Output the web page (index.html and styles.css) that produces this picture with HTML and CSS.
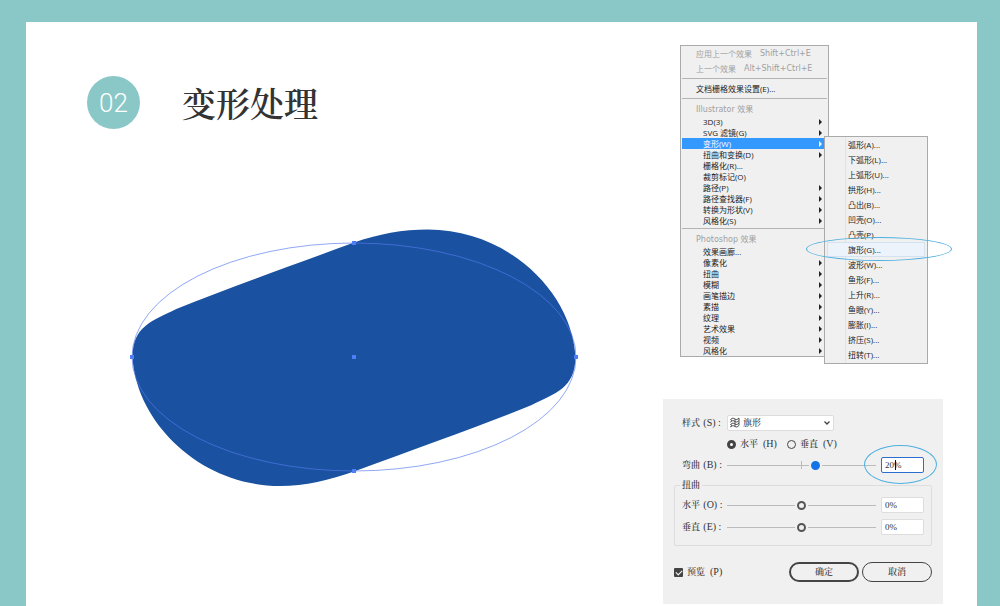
FILE: index.html
```html
<!DOCTYPE html>
<html lang="zh-CN">
<head>
<meta charset="utf-8">
<title>变形处理</title>
<link rel="stylesheet" href="styles.css">
</head>
<body>
<main class="sheet">
  <section class="lesson">
    <header class="lesson-head">
      <span class="badge">02</span>
      <h1 class="title">变形处理</h1>
    </header>
    <svg class="artwork" viewBox="130 228 450 260" role="img" aria-label="旗形变形">
      <path fill="#1a51a0" d="M132.500 357C133 326 152 321 176.300 309C228 288 288 267 354 242.500C378 234 403 229.500 428 229.500C508 229.500 572 292 575.500 357C575 388 556 393 531.700 405C480 426 420 447 354 471.500C330 480 305 486 280 486C200 486 136 422 132.500 357Z"/>
      <ellipse cx="354" cy="357" rx="222" ry="114" fill="none" stroke="#5579ee" stroke-opacity=".65"/>
      <g fill="#4f7df5">
        <rect x="130" y="355" width="4" height="4"/>
        <rect x="574" y="355" width="4" height="4"/>
        <rect x="352" y="241" width="4" height="4"/>
        <rect x="352" y="469" width="4" height="4"/>
        <rect x="352" y="355" width="4" height="4"/>
      </g>
    </svg>
  </section>

  <aside class="panels">
    <nav class="menus">
      <div class="menu">
        <button class="entry muted" disabled>应用上一个效果 <span class="keys">Shift+Ctrl+E</span></button>
        <button class="entry muted" disabled>上一个效果 <span class="keys">Alt+Shift+Ctrl+E</span></button>
        <hr class="rule">
        <button class="entry">文档栅格效果设置(E)...</button>
        <hr class="rule">
        <div class="entry muted group">Illustrator 效果</div>
        <ul class="list">
          <li><button class="item more">3D(3)</button></li>
          <li><button class="item more">SVG 滤镜(G)</button></li>
          <li><button class="item more active">变形(W)</button></li>
          <li><button class="item more">扭曲和变换(D)</button></li>
          <li><button class="item">栅格化(R)...</button></li>
          <li><button class="item">裁剪标记(O)</button></li>
          <li><button class="item more">路径(P)</button></li>
          <li><button class="item more">路径查找器(F)</button></li>
          <li><button class="item more">转换为形状(V)</button></li>
          <li><button class="item more">风格化(S)</button></li>
        </ul>
        <hr class="rule">
        <div class="entry muted group">Photoshop 效果</div>
        <ul class="list">
          <li><button class="item">效果画廊...</button></li>
          <li><button class="item more">像素化</button></li>
          <li><button class="item more">扭曲</button></li>
          <li><button class="item more">模糊</button></li>
          <li><button class="item more">画笔描边</button></li>
          <li><button class="item more">素描</button></li>
          <li><button class="item more">纹理</button></li>
          <li><button class="item more">艺术效果</button></li>
          <li><button class="item more">视频</button></li>
          <li><button class="item more">风格化</button></li>
        </ul>
      </div>
      <ul class="submenu">
        <li><button class="sub">弧形(A)...</button></li>
        <li><button class="sub">下弧形(L)...</button></li>
        <li><button class="sub">上弧形(U)...</button></li>
        <li><button class="sub">拱形(H)...</button></li>
        <li><button class="sub">凸出(B)...</button></li>
        <li><button class="sub">凹壳(O)...</button></li>
        <li><button class="sub">凸壳(P)...</button></li>
        <li><button class="sub hover">旗形(G)...</button></li>
        <li><button class="sub">波形(W)...</button></li>
        <li><button class="sub">鱼形(F)...</button></li>
        <li><button class="sub">上升(R)...</button></li>
        <li><button class="sub">鱼眼(Y)...</button></li>
        <li><button class="sub">膨胀(I)...</button></li>
        <li><button class="sub">挤压(S)...</button></li>
        <li><button class="sub">扭转(T)...</button></li>
      </ul>
      <span class="ring ring-menu"></span>
    </nav>

    <form class="dialog">
      <div class="row">
        <label for="style">样式 <span class="key">(S) :</span></label>
        <div class="picker">
          <select id="style" class="select"><option>旗形</option></select>
          <svg class="flag" viewBox="0 0 12 12" fill="none" stroke="#444" stroke-width=".9"><path d="M1.500 2.500C3.500 .500 4.500 1 6 2S8.500 2.500 10 1V8.500C8.500 10 7.500 10.500 6 9.500S3.500 8 1.500 10C3 8.500 3 7.500 1.500 7.500C3.500 5.500 4.500 6 6 7S8.500 7.500 10 6M1.500 2.500C3 2.500 3 4 1.500 5C3.500 3 4.500 3.500 6 4.500S8.500 5 10 3.500M6 2V9.500"/></svg>
          <svg class="chevron" viewBox="0 0 8 6" fill="none" stroke="#444" stroke-width="1.300"><path d="M1.500 1.500L4 4L6.500 1.500"/></svg>
        </div>
      </div>
      <div class="row">
        <span></span>
        <div class="radios">
          <label class="choice"><input class="radio" type="radio" name="axis" checked>水平 <span class="key">(H)</span></label>
          <label class="choice"><input class="radio" type="radio" name="axis">垂直 <span class="key">(V)</span></label>
        </div>
      </div>
      <div class="row">
        <label for="bend">弯曲 <span class="key">(B) :</span></label>
        <input id="bend" class="range main" type="range" min="-100" max="100" value="20">
        <div class="value">
          <input class="field focused" type="text" value="20%" aria-label="弯曲值">
          <span class="caret"></span>
          <span class="ring ring-value"></span>
        </div>
      </div>
      <fieldset class="distort">
        <legend class="legend">扭曲</legend>
        <div class="row">
          <label for="dx">水平 <span class="key">(O) :</span></label>
          <input id="dx" class="range" type="range" min="-100" max="100" value="0">
          <input class="field" type="text" value="0%" aria-label="水平值">
        </div>
        <div class="row">
          <label for="dy">垂直 <span class="key">(E) :</span></label>
          <input id="dy" class="range" type="range" min="-100" max="100" value="0">
          <input class="field" type="text" value="0%" aria-label="垂直值">
        </div>
      </fieldset>
      <footer class="actions">
        <label class="choice"><input class="check" type="checkbox" checked>预览 <span class="key">(P)</span></label>
        <div class="buttons">
          <button class="btn primary" type="button">确定</button>
          <button class="btn" type="button">取消</button>
        </div>
      </footer>
    </form>
  </aside>
</main>
</body>
</html>
```
FILE: styles.css
```css
* { box-sizing: border-box; }
body {
  margin: 0;
  padding: 22px 23px 0 26px;
  min-height: 100vh;
  display: flex;
  background: #8ac8c7;
  color: #222;
  font-family: "Open Sans", "Noto Sans CJK SC", sans-serif;
}
button, input, select { font: inherit; color: inherit; margin: 0; }
ul { list-style: none; margin: 0; padding: 0; }

.sheet {
  flex: 1;
  display: grid;
  grid-template-columns: 1fr 280px;
  padding-right: 34px;
  background: #fff;
}

.lesson-head {
  display: flex;
  align-items: center;
  gap: 42px;
  padding: 54px 0 0 61px;
}
.badge {
  display: grid;
  place-items: center;
  width: 53px;
  height: 53px;
  border-radius: 50%;
  background: #8ac8c7;
  color: #fff;
  font: 300 26px/32px "Liberation Sans Narrow", Roboto, sans-serif;
}
.title {
  margin: 0;
  color: #333;
  font: 600 34px/40px "Noto Serif CJK SC", "Noto Sans CJK SC", serif;
}
.artwork {
  display: block;
  width: calc(100% - 104px);
  max-width: 450px;
  margin: 99px 0 0 104px;
}

.panels { padding-top: 23px; }
.menus {
  position: relative;
  width: 149px;
  margin-left: 17px;
  font-size: 8px;
}
.menu {
  padding: 0 1px;
  border: 1px solid #aaa;
  background: #f0f0f0;
}
.entry {
  display: flex;
  align-items: center;
  width: 100%;
  height: 15px;
  padding: 0 14px;
  border: 0;
  background: none;
  white-space: nowrap;
}
.muted { color: #a0a0a0; }
.keys { margin-left: 8px; font-family: "DejaVu Sans", sans-serif; }
.group { font-family: "DejaVu Sans", "Noto Sans CJK SC", sans-serif; }
.rule {
  height: 1px;
  margin: 2px 0;
  border: 0;
  background: #b4b4b4;
}
.item {
  display: flex;
  align-items: center;
  justify-content: space-between;
  width: 100%;
  height: 11px;
  padding: 0 5px 0 21px;
  border: 0;
  background: none;
  line-height: 11px;
}
.more::after {
  content: "";
  border: 3px solid transparent;
  border-left-color: currentColor;
  border-right: 0;
}
.active { background: #3399ff; color: #fff; }

.submenu {
  position: absolute;
  left: 144px;
  top: 91px;
  width: 104px;
  padding: 0 2px 1px;
  border: 1px solid #aaa;
  background: linear-gradient(#e2e2e2, #e2e2e2) 20px 0 / 1px 100% no-repeat #f0f0f0;
}
.sub {
  display: block;
  width: 100%;
  height: 15px;
  padding: 0 20px;
  border: 1px solid transparent;
  background: none;
  line-height: 13px;
  text-align: left;
}
.hover { border-color: #d3e2f0; background: #ecf3fa; }

.ring {
  position: absolute;
  border: 1px solid #4fb0e0;
  border-radius: 50%;
  pointer-events: none;
}
.ring-menu { left: 126px; top: 192px; width: 146px; height: 24px; }
.ring-value { left: -17px; top: -12px; width: 73px; height: 39px; }

.dialog {
  display: grid;
  gap: 5px;
  margin-top: 42px;
  padding: 16px 11px 22px;
  background: #f0f0f0;
  color: #333;
  font-family: "Noto Serif CJK SC", "Noto Sans CJK SC", serif;
  font-size: 9px;
  font-weight: 500;
  line-height: 16px;
}
.key { margin-left: 1px; font-family: "Liberation Serif", serif; font-size: 10px; }
.row {
  display: grid;
  grid-template-columns: 40px 1fr 43px;
  gap: 5px;
  padding: 0 8px;
  height: 16px;
  white-space: nowrap;
}
.picker { position: relative; width: 107px; }
.select {
  display: block;
  appearance: none;
  width: 100%;
  height: 16px;
  padding: 0 15px;
  border: 1px solid #ddd;
  border-radius: 2px;
  background: #fff;
  line-height: 14px;
}
.flag { position: absolute; left: 2px; top: 2px; width: 12px; height: 12px; }
.chevron { position: absolute; right: 3px; top: 5px; width: 8px; height: 6px; }
.radios { display: flex; gap: 10px; }
.choice { display: flex; align-items: center; gap: 4px; }
.radio {
  appearance: none;
  width: 9px;
  height: 9px;
  border: 1px solid #444;
  border-radius: 50%;
}
.radio:checked { border-width: 3px; background: #fff; }
.range {
  appearance: none;
  width: 100%;
  height: 16px;
  background: linear-gradient(#bbb, #bbb) center / 100% 1px no-repeat;
}
.main {
  background:
    linear-gradient(#bbb, #bbb) center / 100% 1px no-repeat,
    linear-gradient(#bbb, #bbb) center / 1px 8px no-repeat;
}
.range::-webkit-slider-thumb {
  appearance: none;
  width: 9px;
  height: 9px;
  border: 2px solid #555;
  border-radius: 50%;
  background: #f0f0f0;
  box-shadow: 0 0 0 2px #f0f0f0;
}
.main::-webkit-slider-thumb { border-color: #1473e6; background: #1473e6; }
.value { position: relative; }
.field {
  display: block;
  width: 43px;
  height: 16px;
  padding: 0 3px;
  border: 1px solid #ddd;
  border-radius: 2px;
  background: #fff;
  font: 9px/14px "Liberation Serif", serif;
}
.focused { border-color: #2a6fd0; }
.caret {
  position: absolute;
  left: 14px;
  top: 3px;
  width: 1px;
  height: 10px;
  background: #111;
}
.distort {
  display: grid;
  gap: 6px;
  min-width: 0;
  margin: 1px 0 0;
  padding: 6px 0 10px;
  border: 1px solid #ddd;
  border-radius: 2px;
}
.distort .row { padding: 0 7px; }
.legend { margin-left: 5px; padding: 0 2px; line-height: 12px; }
.actions {
  display: flex;
  align-items: center;
  justify-content: space-between;
  margin-top: 11px;
}
.check {
  appearance: none;
  width: 9px;
  height: 9px;
  border-radius: 1px;
  background: #444;
  display: grid;
  place-items: center;
}
.check::after {
  content: "";
  width: 5px;
  height: 3px;
  border: solid #fff;
  border-width: 0 0 1px 1px;
  rotate: -45deg;
}
.buttons { display: flex; gap: 3px; }
.btn {
  width: 70px;
  height: 20px;
  padding: 0;
  border: 1px solid #444;
  border-radius: 10px;
  background: none;
}
.primary { border-width: 2px; }
```
